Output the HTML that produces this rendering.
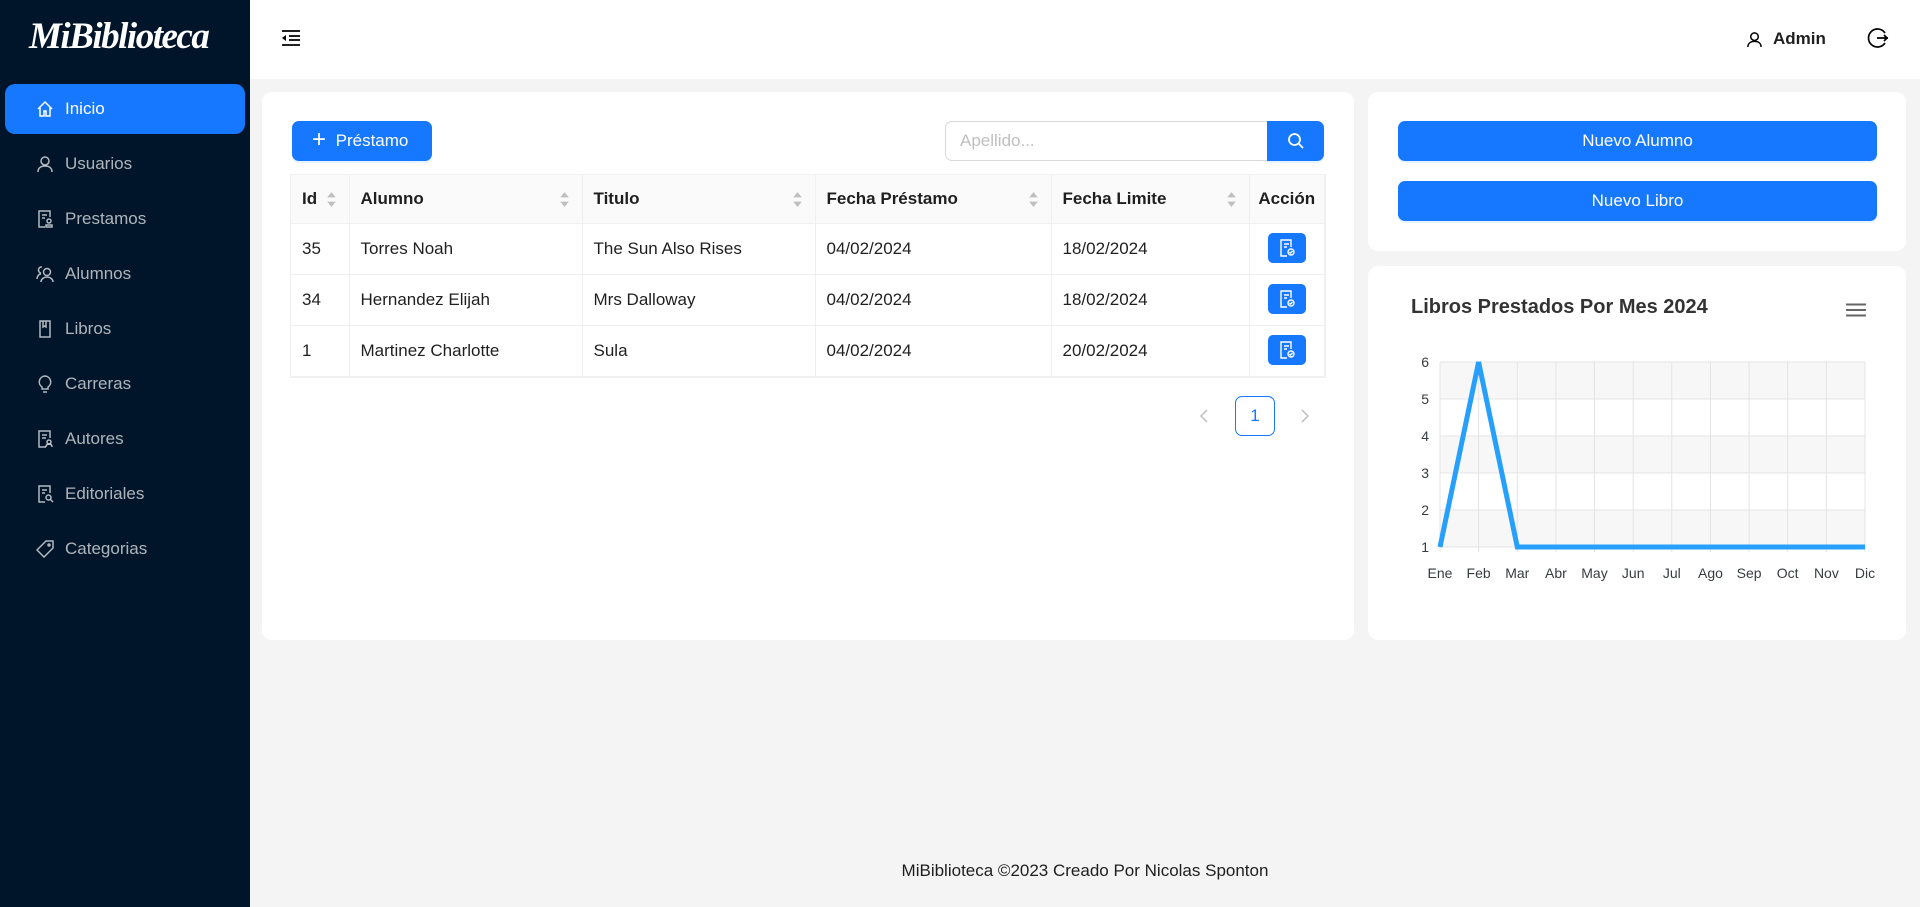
<!DOCTYPE html>
<html><head><meta charset="utf-8"><style>
*{box-sizing:border-box;margin:0;padding:0}
body{width:1920px;height:907px;overflow:hidden;background:#f4f4f4;font-family:"Liberation Sans",sans-serif;position:relative;color:rgba(0,0,0,.88)}
.side{position:absolute;left:0;top:0;width:250px;height:907px;background:#001529}
.logo{position:absolute;left:29px;top:15px;font-family:"Liberation Serif",serif;font-style:italic;font-weight:bold;font-size:37px;color:#fff;letter-spacing:-1.5px}
.mi{position:absolute;left:5px;width:240px;height:50px;border-radius:10px;color:rgba(255,255,255,.68);font-size:17px;line-height:50px;padding-left:60px}
.mi.act{background:#1677ff;color:#fff}
.mi svg{position:absolute;left:31px;top:16px}
.hdr{position:absolute;left:250px;top:0;right:0;height:79px;background:#fff}
.card{position:absolute;background:#fff;border-radius:10px}
.btn{position:absolute;background:#1677ff;color:#fff;border-radius:7px;font-size:17px;text-align:center;box-shadow:0 2px 0 rgba(5,145,255,.1)}
table{position:absolute;left:291px;top:175px;width:1034px;border-collapse:collapse;font-size:17px;table-layout:fixed}
td,th{border-bottom:1px solid #f0f0f0;padding:0 11px;text-align:left;position:relative}
th{background:#fafafa;height:48px;font-weight:600;border-right:1px solid #f0f0f0}
td{height:51px;border-right:1px solid #f0f0f0}
table{outline:1px solid #f0f0f0}
.sort{position:absolute;right:12px;top:16px}
.ab{display:inline-block;width:38px;height:30px;background:#1677ff;border-radius:5px;position:relative;top:2px}
.ab svg{position:absolute;left:11px;top:6px}
</style></head><body>
<div class="side">
<div class="logo">MiBiblioteca</div>
<div class="mi act" style="top:84px"><svg width="18" height="18" viewBox="0 0 18 18" fill="none" stroke="#fff" stroke-width="1.5"><path d="M2 9L9 2l7 7M4 7v9h4v-5h2v5h4V7"/></svg>Inicio</div>
<div class="mi" style="top:139px"><svg width="18" height="18" viewBox="0 0 18 18" fill="none" stroke="rgba(255,255,255,.7)" stroke-width="1.5"><circle cx="9" cy="6" r="4"/><path d="M2 17c0-4 3-6 7-6s7 2 7 6"/></svg>Usuarios</div>
<div class="mi" style="top:194px"><svg width="18" height="18" viewBox="0 0 18 18" fill="none" stroke="rgba(255,255,255,.7)" stroke-width="1.5"><path d="M14 7V1H3v16h6M6 5h5M6 8h3"/><circle cx="13" cy="11" r="2"/><path d="M10 17h6v-2h-6z"/></svg>Prestamos</div>
<div class="mi" style="top:249px"><svg width="18" height="18" viewBox="0 0 18 18" fill="none" stroke="rgba(255,255,255,.7)" stroke-width="1.5"><circle cx="11" cy="7" r="3.5"/><path d="M5 17c0-3 3-5 6-5s6 2 6 5M6 2a3 3 0 0 0-1 6M1 14c0-3 2-5 4-5"/></svg>Alumnos</div>
<div class="mi" style="top:304px"><svg width="18" height="18" viewBox="0 0 18 18" fill="none" stroke="rgba(255,255,255,.7)" stroke-width="1.5"><path d="M4 1h10v16H4zM7 1v6l1.5-1 1.5 1V1"/></svg>Libros</div>
<div class="mi" style="top:359px"><svg width="18" height="18" viewBox="0 0 18 18" fill="none" stroke="rgba(255,255,255,.7)" stroke-width="1.5"><path d="M9 1a6 6 0 0 0-3 11v2h6v-2A6 6 0 0 0 9 1zM7 17h4"/></svg>Carreras</div>
<div class="mi" style="top:414px"><svg width="18" height="18" viewBox="0 0 18 18" fill="none" stroke="rgba(255,255,255,.7)" stroke-width="1.5"><path d="M14 8V1H3v16h7M6 5h5M6 8h4"/><circle cx="13" cy="12" r="2"/><path d="M10 17c0-2 1-3 3-3s3 1 3 3"/></svg>Autores</div>
<div class="mi" style="top:469px"><svg width="18" height="18" viewBox="0 0 18 18" fill="none" stroke="rgba(255,255,255,.7)" stroke-width="1.5"><path d="M14 8V1H3v16h6M6 5h5M6 8h3"/><circle cx="12.5" cy="12.5" r="2.5"/><path d="M14.5 14.5L17 17"/></svg>Editoriales</div>
<div class="mi" style="top:524px"><svg width="18" height="18" viewBox="0 0 18 18" fill="none" stroke="rgba(255,255,255,.7)" stroke-width="1.5"><path d="M10 1h7v7l-9 9-7-7z"/><circle cx="13" cy="5" r="1"/></svg>Categorias</div>
</div>
<div class="hdr">
<svg style="position:absolute;left:31px;top:29px" width="20" height="18" viewBox="0 0 20 18" fill="none" stroke="#000" stroke-width="1.8"><path d="M1 2h18M8 7h11M8 11h11M1 16h18"/><path d="M5 6L1 9l4 3z" fill="#000" stroke="none"/></svg>
<svg style="position:absolute;left:1496px;top:31px" width="17" height="17" viewBox="0 0 18 18" fill="none" stroke="#000" stroke-width="1.6"><circle cx="9" cy="6" r="4"/><path d="M2 17c0-4 3-6 7-6s7 2 7 6"/></svg>
<div style="position:absolute;left:1523px;top:29px;font-size:17px;font-weight:bold">Admin</div>
<svg style="position:absolute;left:1617px;top:27px" width="22" height="22" viewBox="0 0 22 22" fill="none" stroke="#000" stroke-width="1.7"><path d="M18 6A9 9 0 1 0 18 16M10 11h11M17 8l3 3-3 3"/></svg>
</div>
<div class="card" style="left:262px;top:92px;width:1092px;height:548px"></div>
<div class="card" style="left:1368px;top:92px;width:538px;height:159px"></div>
<div class="card" style="left:1368px;top:266px;width:538px;height:374px"></div>
<div class="btn" style="left:292px;top:121px;width:140px;height:40px;line-height:40px;padding-left:20px"><span style="position:absolute;left:20px;top:-1px;font-size:24px;font-weight:300">+</span>Préstamo</div>
<div style="position:absolute;left:945px;top:121px;width:324px;height:40px;border:1px solid #d9d9d9;border-radius:7px 0 0 7px;color:#bfbfbf;font-size:17px;line-height:38px;padding-left:14px">Apellido...</div>
<div class="btn" style="left:1267px;top:121px;width:57px;height:40px;border-radius:0 7px 7px 0"><svg style="margin-top:11px" width="18" height="18" viewBox="0 0 18 18" fill="none" stroke="#fff" stroke-width="1.8"><circle cx="7.5" cy="7.5" r="5.5"/><path d="M11.5 11.5L16 16"/></svg></div>
<table>
<colgroup><col style="width:58px"><col style="width:233px"><col style="width:233px"><col style="width:236px"><col style="width:198px"><col></colgroup>
<tr><th>Id<svg class="sort" width="11" height="17" viewBox="0 0 10 16"><path d="M5 1L9 6H1z M5 15L9 10H1z" fill="#bfbfbf"/></svg></th><th>Alumno<svg class="sort" width="11" height="17" viewBox="0 0 10 16"><path d="M5 1L9 6H1z M5 15L9 10H1z" fill="#bfbfbf"/></svg></th><th>Titulo<svg class="sort" width="11" height="17" viewBox="0 0 10 16"><path d="M5 1L9 6H1z M5 15L9 10H1z" fill="#bfbfbf"/></svg></th><th>Fecha Préstamo<svg class="sort" width="11" height="17" viewBox="0 0 10 16"><path d="M5 1L9 6H1z M5 15L9 10H1z" fill="#bfbfbf"/></svg></th><th>Fecha Limite<svg class="sort" width="11" height="17" viewBox="0 0 10 16"><path d="M5 1L9 6H1z M5 15L9 10H1z" fill="#bfbfbf"/></svg></th><th style="text-align:center;padding:0">Acción</th></tr>
<tr><td>35</td><td>Torres Noah</td><td>The Sun Also Rises</td><td>04/02/2024</td><td>18/02/2024</td><td style="text-align:center;padding:0"><span class="ab"><svg width="16" height="18" viewBox="0 0 16 18" fill="none" stroke="#fff" stroke-width="1.4"><path d="M12 8V1H2v16h6M5 5h5M5 8h3"/><circle cx="12" cy="13" r="3"/><path d="M10.5 13l1 1 2-2"/></svg></span></td></tr>
<tr><td>34</td><td>Hernandez Elijah</td><td>Mrs Dalloway</td><td>04/02/2024</td><td>18/02/2024</td><td style="text-align:center;padding:0"><span class="ab"><svg width="16" height="18" viewBox="0 0 16 18" fill="none" stroke="#fff" stroke-width="1.4"><path d="M12 8V1H2v16h6M5 5h5M5 8h3"/><circle cx="12" cy="13" r="3"/><path d="M10.5 13l1 1 2-2"/></svg></span></td></tr>
<tr><td>1</td><td>Martinez Charlotte</td><td>Sula</td><td>04/02/2024</td><td>20/02/2024</td><td style="text-align:center;padding:0"><span class="ab"><svg width="16" height="18" viewBox="0 0 16 18" fill="none" stroke="#fff" stroke-width="1.4"><path d="M12 8V1H2v16h6M5 5h5M5 8h3"/><circle cx="12" cy="13" r="3"/><path d="M10.5 13l1 1 2-2"/></svg></span></td></tr>
</table>
<svg style="position:absolute;left:1199px;top:409px" width="10" height="14"><path d="M8 1L2 7l6 6" fill="none" stroke="#bfbfbf" stroke-width="1.5"/></svg>
<div style="position:absolute;left:1235px;top:396px;width:40px;height:40px;border:1px solid #1677ff;border-radius:7px;color:#1677ff;text-align:center;line-height:38px;font-size:17px">1</div>
<svg style="position:absolute;left:1300px;top:409px" width="10" height="14"><path d="M2 1l6 6-6 6" fill="none" stroke="#bfbfbf" stroke-width="1.5"/></svg>
<div class="btn" style="left:1398px;top:121px;width:479px;height:40px;line-height:40px">Nuevo Alumno</div>
<div class="btn" style="left:1398px;top:181px;width:479px;height:40px;line-height:40px">Nuevo Libro</div>
<div style="position:absolute;left:1411px;top:296px;font-size:20px;font-weight:bold;color:#333">Libros Prestados Por Mes 2024</div>
<svg style="position:absolute;left:1846px;top:303px" width="20" height="14"><path d="M0 1.5h20M0 7h20M0 12.5h20" stroke="#666" stroke-width="2"/></svg>
<svg style="position:absolute;left:1400px;top:340px" width="500" height="250" font-family="Liberation Sans" font-size="14" fill="#373d3f">
<rect x="40" y="22" width="425" height="37" fill="#f7f7f7"/><rect x="40" y="96" width="425" height="37" fill="#f7f7f7"/><rect x="40" y="170" width="425" height="37" fill="#f7f7f7"/>
<g stroke="#e4e4e4" stroke-width="1">
<path d="M40 22h425M40 59h425M40 96h425M40 133h425M40 170h425M40 207h425"/>
<path d="M40 22v190M78.6 22v190M117.3 22v190M155.9 22v190M194.5 22v190M233.2 22v190M271.8 22v190M310.5 22v190M349.1 22v190M387.7 22v190M426.4 22v190M465 22v190"/>
</g>
<polyline points="40,207 78.6,22 117.3,207 465,207" fill="none" stroke="#26a0fc" stroke-width="5"/>
<g text-anchor="end"><text x="29" y="27">6</text><text x="29" y="64">5</text><text x="29" y="101">4</text><text x="29" y="138">3</text><text x="29" y="175">2</text><text x="29" y="212">1</text></g>
<g text-anchor="middle"><text x="40" y="238">Ene</text><text x="78.6" y="238">Feb</text><text x="117.3" y="238">Mar</text><text x="155.9" y="238">Abr</text><text x="194.5" y="238">May</text><text x="233.2" y="238">Jun</text><text x="271.8" y="238">Jul</text><text x="310.5" y="238">Ago</text><text x="349.1" y="238">Sep</text><text x="387.7" y="238">Oct</text><text x="426.4" y="238">Nov</text><text x="465" y="238">Dic</text></g>
</svg>
<div style="position:absolute;left:250px;right:0;top:861px;text-align:center;font-size:17px">MiBiblioteca ©2023 Creado Por Nicolas Sponton</div>
</body></html>
